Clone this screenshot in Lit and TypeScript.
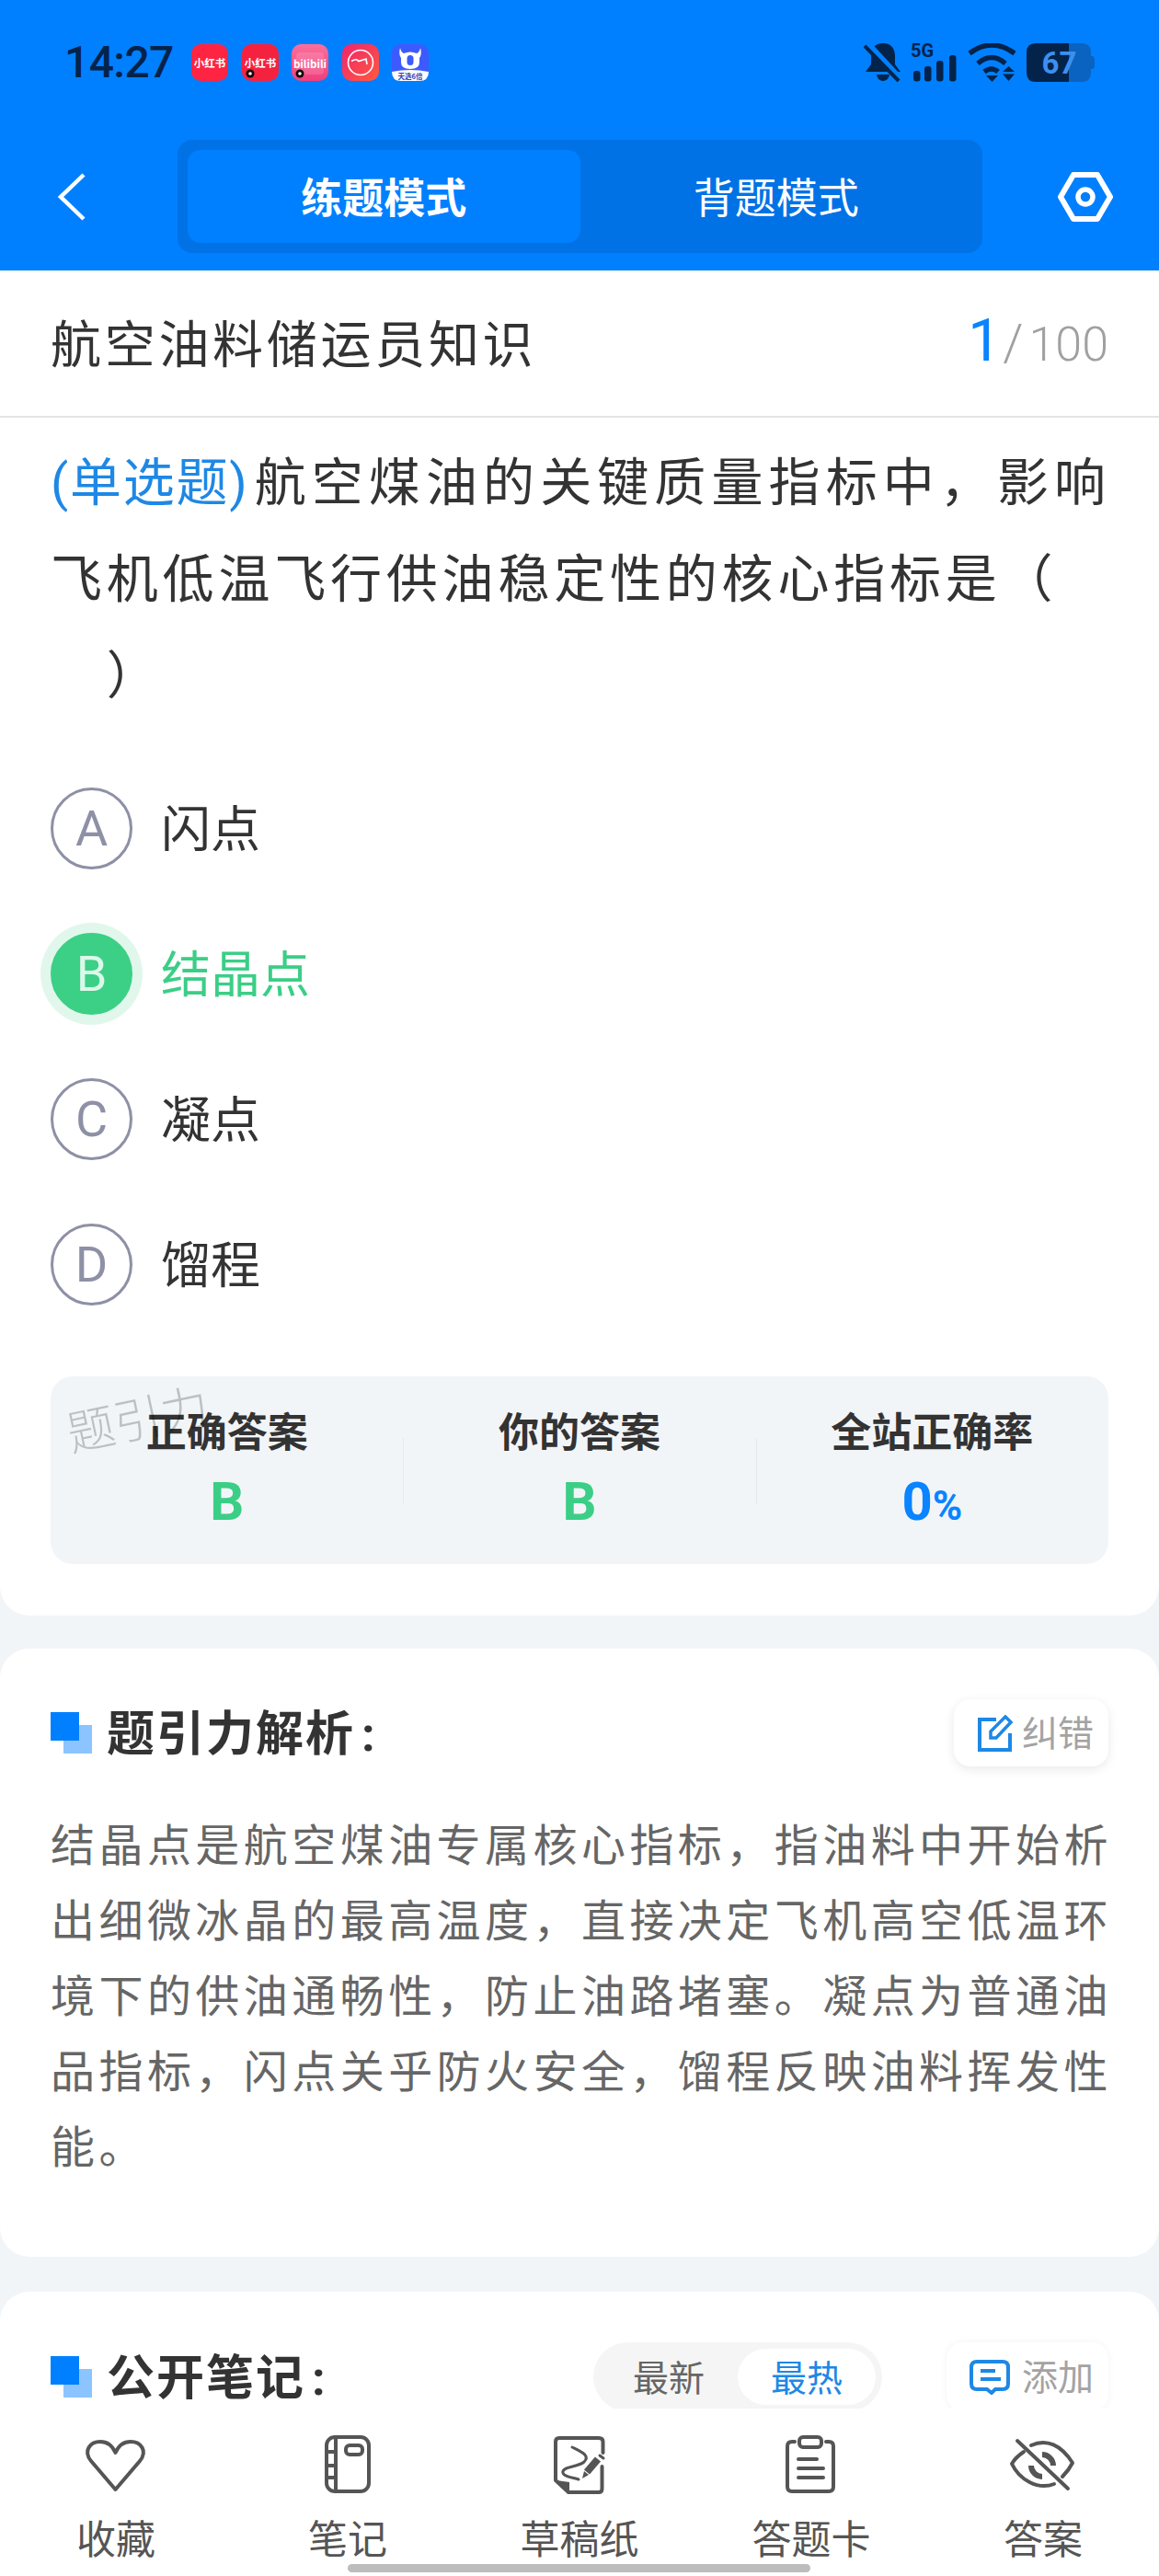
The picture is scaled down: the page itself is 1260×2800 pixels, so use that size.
import { LitElement, html, css, svg } from 'lit';
import { customElement } from 'lit/decorators.js';

const options = [
  { key: 'A', text: '闪点', on: false },
  { key: 'B', text: '结晶点', on: true },
  { key: 'C', text: '凝点', on: false },
  { key: 'D', text: '馏程', on: false },
];

const stats = [
  { label: '正确答案', value: 'B', unit: '', cls: 'green' },
  { label: '你的答案', value: 'B', unit: '', cls: 'green' },
  { label: '全站正确率', value: '0', unit: '%', cls: 'blue' },
];

const explain = '结晶点是航空煤油专属核心指标，指油料中开始析出细微冰晶的最高温度，直接决定飞机高空低温环境下的供油通畅性，防止油路堵塞。凝点为普通油品指标，闪点关乎防火安全，馏程反映油料挥发性能。';

// bottom bar icons, all in a 80x70 box centred on the tab
const tabs = [
  {
    label: '收藏',
    icon: svg`<path d="M39.5 61 L13 30 C4 19 12 9 23 9 C30 9 36 13 39.5 21 C43 13 49 9 56 9 C67 9 75 19 66 30 Z"/>`,
  },
  {
    label: '笔记',
    icon: svg`<rect x="17" y="4" width="46" height="59" rx="9"/><path d="M27 4V63M17 20H27M17 35H27M17 48H27"/><rect x="38" y="13" width="18" height="10" rx="4"/>`,
  },
  {
    label: '草稿纸',
    icon: svg`<path d="M65.5 21V9Q65.5 5 61 5H18Q14 5 14 9V51L28 64H61Q64.5 64 64.5 60V36"/>
      <path class="fill" d="M15 51L29 53V65Z"/>
      <path class="thin" d="M32 15C42 20 52 24 45 31C38 37 20 36 22 43C23 47 33 48 39 50"/>
      <path class="thick" d="M48 42L60 28"/><path class="fill" d="M43 49L45 41L50 45Z"/><path class="thin" d="M62 24L66 27"/>`,
  },
  {
    label: '答题卡',
    icon: svg`<path d="M22 9H19Q14 9 14 14V58Q14 63 19 63H59Q64 63 64 58V14Q64 9 59 9H56"/>
      <rect x="27" y="4" width="24" height="11" rx="4"/><path d="M26 28H46M26 38H53M26 48H53"/>`,
  },
  {
    label: '答案',
    icon: svg`<path d="M27 13C44 5 60 13 72 32C69 38 65 43 61 47"/><path d="M19 20C13 24 9 28 6 33C14 50 34 62 52 55"/>
      <path class="fat" d="M39 23A12 12 0 0 1 51 35M27 35A12 12 0 0 0 39 47"/><path d="M12 8L67 60"/>`,
  },
];

@customElement('app-root')
export class AppRoot extends LitElement {
  static styles = css`
    :host {
      display: flex;
      flex-direction: column;
      position: relative;
      width: 1260px;
      height: 2800px;
      overflow: hidden;
      background: #f2f5f8;
      color: #333;
      font-family: Roboto, 'Noto Sans CJK SC', sans-serif;
    }

    /* blue header */
    .header {
      flex: none;
      height: 294px;
      box-sizing: border-box;
      padding-top: 47px;
      background: #0080ff;
    }
    .status {
      display: flex;
      align-items: flex-start;
      height: 42px;
      padding: 0 70px 0 70px;
      color: #04234a;
    }
    .time {
      width: 138px;
      font-size: 48px;
      font-weight: 500;
      line-height: 42px;
      letter-spacing: -0.6px;
    }
    .apps {
      display: flex;
      gap: 14.5px;
      margin-top: 1px;
    }
    .apps svg {
      display: block;
    }
    .apps text {
      font-family: 'Noto Sans CJK SC', sans-serif;
      font-weight: 700;
      text-anchor: middle;
    }
    .sys {
      display: flex;
      margin-left: auto;
    }
    .sys svg {
      display: block;
    }
    .sys text {
      font-family: Roboto, sans-serif;
      font-weight: 700;
    }
    .nav {
      display: flex;
      align-items: center;
      margin-top: 63px;
      height: 123px;
    }
    .back {
      flex: none;
      width: 193px;
      padding-left: 62px;
      box-sizing: border-box;
    }
    .back svg,
    .gear svg {
      display: block;
    }
    .modes {
      flex: none;
      display: grid;
      grid-template-columns: 1fr 1fr;
      box-sizing: border-box;
      width: 875px;
      height: 123px;
      padding: 11px;
      border-radius: 16px;
      background: #0072e6;
    }
    .mode {
      display: flex;
      align-items: center;
      justify-content: center;
      box-sizing: border-box;
      padding-bottom: 2px;
      border-radius: 14px;
      color: #fff;
      font-size: 45px;
    }
    .mode.on {
      background: #0080ff;
      font-weight: 700;
    }
    .gear {
      margin-left: 82px;
    }

    .scroll {
      flex: 1;
      min-height: 0;
      overflow: hidden;
    }
    .card {
      background: #fff;
      border-radius: 32px;
    }
    .card.first {
      border-radius: 0 0 32px 32px;
      padding-bottom: 56px;
    }

    .title-row {
      display: flex;
      align-items: center;
      justify-content: space-between;
      box-sizing: border-box;
      height: 160px;
      padding: 0 55px 6px;
      border-bottom: 2px solid #e4e4e4;
    }
    .paper {
      font-size: 55px;
      letter-spacing: 3.7px;
    }
    .count {
      display: flex;
      align-items: baseline;
      color: #a0a0a0;
      font-size: 52px;
      font-weight: 300;
    }
    .count b {
      color: #0a84ff;
      font-size: 64px;
      font-weight: 400;
    }
    .count i {
      font-style: normal;
      margin: 0 6px 0 2px;
      font-size: 56px;
    }

    .question {
      margin: 0;
      padding: 19px 0 0 55px;
      font-size: 56px;
      line-height: 105px;
      letter-spacing: 4.8px;
      white-space: nowrap;
    }
    .lead {
      letter-spacing: 6.1px;
    }
    .tag {
      color: #1e88e5;
      letter-spacing: 1.8px;
      margin-right: 6px;
    }

    .options {
      margin-top: 33px;
    }
    .option {
      display: flex;
      align-items: center;
      gap: 31px;
      height: 158px;
      padding-left: 55px;
      font-size: 54px;
    }
    .option-text {
      padding-bottom: 6px;
    }
    .letter {
      flex: none;
      display: flex;
      align-items: center;
      justify-content: center;
      box-sizing: border-box;
      width: 89px;
      height: 89px;
      border: 3px solid #8e90a6;
      border-radius: 50%;
      color: #8e90a6;
      font-size: 54px;
      font-weight: 400;
    }
    .option.on {
      color: #3bce86;
    }
    .option.on .letter {
      border-color: #3bd086;
      background: #3bd086;
      box-shadow: 0 0 0 11px #e1f7ec;
      color: #dcf8ea;
    }

    .stats {
      position: relative;
      display: grid;
      grid-template-columns: repeat(3, 1fr);
      margin: 43px 55px 0;
      height: 204px;
      border-radius: 24px;
      background: #f2f5f8;
    }
    .stat {
      position: relative;
      text-align: center;
      padding-top: 32px;
    }
    .stat + .stat::before {
      content: '';
      position: absolute;
      left: 0;
      top: 67px;
      height: 72px;
      border-left: 1px solid #e6e9ec;
    }
    .stat-label {
      font-size: 44px;
      font-weight: 700;
      line-height: 60px;
    }
    .stat-value {
      margin-top: 14px;
      font-size: 58px;
      font-weight: 700;
      line-height: 60px;
    }
    .stat-value small {
      font-size: 44px;
    }
    .green {
      color: #3bce86;
    }
    .blue {
      color: #0a84ff;
    }
    .mark {
      position: absolute;
      left: 16px;
      top: 6px;
      color: rgba(0, 0, 0, 0.22);
      font-size: 52px;
      font-weight: 300;
      transform: rotate(-12deg);
      z-index: 0;
    }

    .section {
      margin-top: 36px;
      padding: 55px 55px 77px;
    }
    .section.notes {
      margin-top: 38px;
    }
    .head {
      display: flex;
      align-items: center;
      height: 73px;
    }
    .head.tall {
      height: 75px;
    }
    .bullet {
      position: relative;
      flex: none;
      width: 45px;
      height: 45px;
      margin-right: 16px;
    }
    .bullet::before,
    .bullet::after {
      content: '';
      position: absolute;
      width: 31px;
      height: 31px;
    }
    .bullet::before {
      right: 0;
      bottom: 0;
      background: #8cc4ff;
    }
    .bullet::after {
      left: 0;
      top: 0;
      background: #0080ff;
    }
    .head h2 {
      margin: 0;
      padding-bottom: 6px;
      font-size: 52px;
      font-weight: 700;
      letter-spacing: 2px;
    }
    .head h2 span {
      margin-left: 7px;
    }
    .action {
      display: flex;
      align-items: center;
      box-sizing: border-box;
      height: 100%;
      margin-left: auto;
      padding: 0 16px 0 25px;
      gap: 9px;
      border-radius: 18px;
      background: #fff;
      box-shadow: 0 3px 12px rgba(0, 0, 0, 0.09);
      color: #a3a3a3;
      font-size: 39px;
    }
    .action span {
      padding-bottom: 6px;
    }
    .action svg {
      display: block;
      fill: none;
      stroke: #1e88e5;
      stroke-width: 4;
    }
    .action.add {
      gap: 13px;
      margin-left: 70px;
      box-shadow: 0 0 8px rgba(0, 0, 0, 0.05);
    }
    .body {
      margin: 46px -10px 0 0;
      color: #666;
      font-size: 48px;
      line-height: 82px;
      letter-spacing: 4.45px;
    }
    .segment {
      display: grid;
      grid-template-columns: 150px 150px;
      box-sizing: border-box;
      height: 75px;
      margin-left: auto;
      padding: 7px;
      border-radius: 38px;
      background: #f5f5f5;
      color: #666;
      font-size: 39px;
    }
    .segment span {
      display: flex;
      align-items: center;
      justify-content: center;
      box-sizing: border-box;
      padding-bottom: 4px;
      border-radius: 31px;
    }
    .segment .on {
      background: #fff;
      color: #1e88e5;
    }

    .bar {
      flex: none;
      display: grid;
      grid-template-columns: repeat(5, 252px);
      box-sizing: border-box;
      height: 182px;
      padding-top: 27px;
      background: #fff;
      color: #555;
      font-size: 43px;
      text-align: center;
    }
    .bar svg {
      display: block;
      margin: 0 auto 21px;
      fill: none;
      stroke: #555;
      stroke-width: 4;
      stroke-linejoin: round;
      stroke-linecap: round;
    }
    .bar svg .fill {
      fill: #555;
      stroke: none;
    }
    .bar svg .thin {
      stroke-width: 3;
    }
    .bar svg .thick {
      stroke-width: 8;
      stroke-linecap: butt;
    }
    .bar svg .fat {
      stroke-width: 6;
      stroke-linecap: butt;
    }
    .bar-label {
      line-height: 50px;
    }
    .home {
      position: absolute;
      left: 378px;
      top: 2787px;
      width: 503px;
      height: 9px;
      border-radius: 5px;
      background: #bdbdbd;
    }
  `;

  private renderApps() {
    return html`<div class="apps">
      <svg width="40" height="40" viewBox="0 0 40 40">
        <rect width="40" height="40" rx="10" fill="#ff2442" />
        <text x="20" y="24.5" font-size="11.5" fill="#fff">小红书</text>
      </svg>
      <svg width="40" height="40" viewBox="0 0 40 40">
        <rect width="40" height="40" rx="10" fill="#f5223f" />
        <text x="20" y="24.5" font-size="11.5" fill="#fff">小红书</text>
        <circle cx="9" cy="32" r="4.5" fill="#14060a" />
        <circle cx="9" cy="32" r="1.8" fill="#fff" />
      </svg>
      <svg width="40" height="40" viewBox="0 0 40 40">
        <defs>
          <linearGradient id="bili" x1="0" y1="0" x2="0" y2="1">
            <stop offset="0" stop-color="#fb6f9c" />
            <stop offset="1" stop-color="#ef3f7c" />
          </linearGradient>
        </defs>
        <rect width="40" height="40" rx="10" fill="url(#bili)" />
        <rect x="5" y="9" width="30" height="24" rx="4" fill="#fff" opacity="0.14" />
        <text x="20" y="26" font-size="11.5" fill="#fff">bilibili</text>
        <circle cx="9" cy="32" r="4.5" fill="#14060a" />
        <circle cx="9" cy="32" r="1.8" fill="#fff" />
      </svg>
      <svg width="40" height="40" viewBox="0 0 40 40">
        <defs>
          <linearGradient id="mei" x1="0" y1="0" x2="1" y2="1">
            <stop offset="0" stop-color="#f0246e" />
            <stop offset="1" stop-color="#ff5a3e" />
          </linearGradient>
        </defs>
        <rect width="40" height="40" rx="10" fill="url(#mei)" />
        <circle cx="20" cy="20" r="13.5" fill="none" stroke="#fff" stroke-width="1.6" />
        <path d="M10 18.5Q14 16 16 17L18 18.5L26 16L27 22" fill="none" stroke="#fff" stroke-width="1.6" />
      </svg>
      <svg width="40" height="40" viewBox="0 0 40 40">
        <rect width="40" height="40" rx="10" fill="#3d5afe" />
        <path d="M0 30Q20 26 40 30V30Q40 40 30 40H10Q0 40 0 30Z" fill="#fff" />
        <path d="M9 4Q10 9 13 10Q20 7 27 10Q30 9 31 4Q33 11 30 15V20Q30 27 20 27Q10 27 10 20V15Q7 11 9 4Z" fill="#fff" />
        <rect x="16.5" y="12" width="7" height="11" rx="3.5" fill="#3d5afe" />
        <text x="20" y="38" font-size="7.5" fill="#2b3fb8">天选6倍</text>
      </svg>
    </div>`;
  }

  private renderSystem() {
    const dark = '#04234a';
    return html`<div class="sys">
      <svg width="51" height="42" viewBox="0 0 51 42">
        <path d="M21 0C12 0 8 6 8 14V23L2 31H40L34 23V14C34 6 30 0 21 0Z" fill=${dark} />
        <path d="M14 34H28C27 39 24 41 21 41C18 41 15 39 14 34Z" fill=${dark} />
        <path d="M4 1L40 40" stroke="#0080ff" stroke-width="8" />
        <path d="M1 3L38 41" stroke=${dark} stroke-width="4" />
      </svg>
      <svg width="62" height="42" viewBox="0 0 62 42">
        <text x="0" y="15" font-size="20" fill=${dark}>5G</text>
        <rect x="3" y="30" width="7.5" height="11.5" rx="3" fill=${dark} />
        <rect x="15" y="25" width="7.5" height="16.5" rx="3" fill=${dark} />
        <rect x="28" y="19" width="7.5" height="22.5" rx="3" fill=${dark} />
        <rect x="42" y="13" width="7.5" height="28.5" rx="3" fill=${dark} />
      </svg>
      <svg width="64" height="42" viewBox="0 0 64 42">
        <g fill="none" stroke=${dark} stroke-width="5.5">
          <path d="M2 11Q26 -7 51 11" />
          <path d="M11 22Q26 9 41 22" />
          <path d="M18 31Q26 25 33 31" />
        </g>
        <path d="M20 35H33L26.5 42Z" fill=${dark} />
        <path d="M38 31H51L44.500 25Z M38 33.500H51L44.500 41Z" fill=${dark} />
      </svg>
      <svg width="74" height="42" viewBox="0 0 74 42">
        <path d="M46 0H60Q70 0 70 10V32Q70 42 60 42H46Z" fill="#0a63c0" />
        <path d="M70 14H71Q74 14 74 18V24Q74 28 71 28H70Z" fill="#0a63c0" />
        <path d="M10 0H46V42H10Q0 42 0 32V10Q0 0 10 0Z" fill=${dark} />
        <text x="16.500" y="33" font-size="33" fill="#3d8fef">67</text>
      </svg>
    </div>`;
  }

  render() {
    return html`
      <header class="header">
        <div class="status">
          <div class="time">14:27</div>
          ${this.renderApps()} ${this.renderSystem()}
        </div>
        <div class="nav">
          <div class="back">
            <svg width="32" height="54" viewBox="0 0 32 54" fill="none" stroke="#fff" stroke-width="4.500">
              <path d="M29 3L4 27L29 51" />
            </svg>
          </div>
          <div class="modes">
            <div class="mode on">练题模式</div>
            <div class="mode">背题模式</div>
          </div>
          <div class="gear">
            <svg width="60" height="54" viewBox="0 0 60 54" fill="none" stroke="#fff">
              <path d="M17 3H43L57 27L43 51H17L3 27Z" stroke-width="6" stroke-linejoin="round" />
              <circle cx="30" cy="27" r="8" stroke-width="5.500" />
            </svg>
          </div>
        </div>
      </header>

      <div class="scroll">
        <section class="card first">
          <div class="title-row">
            <div class="paper">航空油料储运员知识</div>
            <div class="count"><b>1</b><i>/</i>100</div>
          </div>
          <p class="question">
            <span class="lead"><span class="tag">(单选题)</span>航空煤油的关键质量指标中，影响</span><br />飞机低温飞行供油稳定性的核心指标是（<br />　）
          </p>
          <div class="options">
            ${options.map(
              (o) => html`
                <div class="option ${o.on ? 'on' : ''}">
                  <div class="letter">${o.key}</div>
                  <div class="option-text">${o.text}</div>
                </div>
              `
            )}
          </div>
          <div class="stats">
            ${stats.map(
              (s) => html`
                <div class="stat">
                  <div class="stat-label">${s.label}</div>
                  <div class="stat-value ${s.cls}">${s.value}<small>${s.unit}</small></div>
                </div>
              `
            )}
            <div class="mark">题引力</div>
          </div>
        </section>

        <section class="card section">
          <div class="head">
            <div class="bullet"></div>
            <h2>题引力解析<span>:</span></h2>
            <div class="action">
              <svg width="40" height="40" viewBox="0 0 40 40">
                <path d="M21 5H3V38H36V20" />
                <path d="M15 18L31 2L37 8L21 25H15Z" stroke-width="3.500" />
              </svg>
              <span>纠错</span>
            </div>
          </div>
          <p class="body">${explain}</p>
        </section>

        <section class="card section notes">
          <div class="head tall">
            <div class="bullet"></div>
            <h2>公开笔记<span>:</span></h2>
            <div class="segment">
              <span>最新</span>
              <span class="on">最热</span>
            </div>
            <div class="action add">
              <svg width="44" height="38" viewBox="0 0 44 38">
                <path d="M8 2H36Q42 2 42 8V26Q42 32 36 32H28L24 36L19 32H8Q2 32 2 26V8Q2 2 8 2Z" />
                <path d="M12 12H28M12 21H34" />
              </svg>
              <span>添加</span>
            </div>
          </div>
        </section>
      </div>

      <nav class="bar">
        ${tabs.map(
          (t) => html`
            <div>
              <svg width="80" height="70" viewBox="0 0 80 70">${t.icon}</svg>
              <div class="bar-label">${t.label}</div>
            </div>
          `
        )}
      </nav>
      <div class="home"></div>
    `;
  }
}
